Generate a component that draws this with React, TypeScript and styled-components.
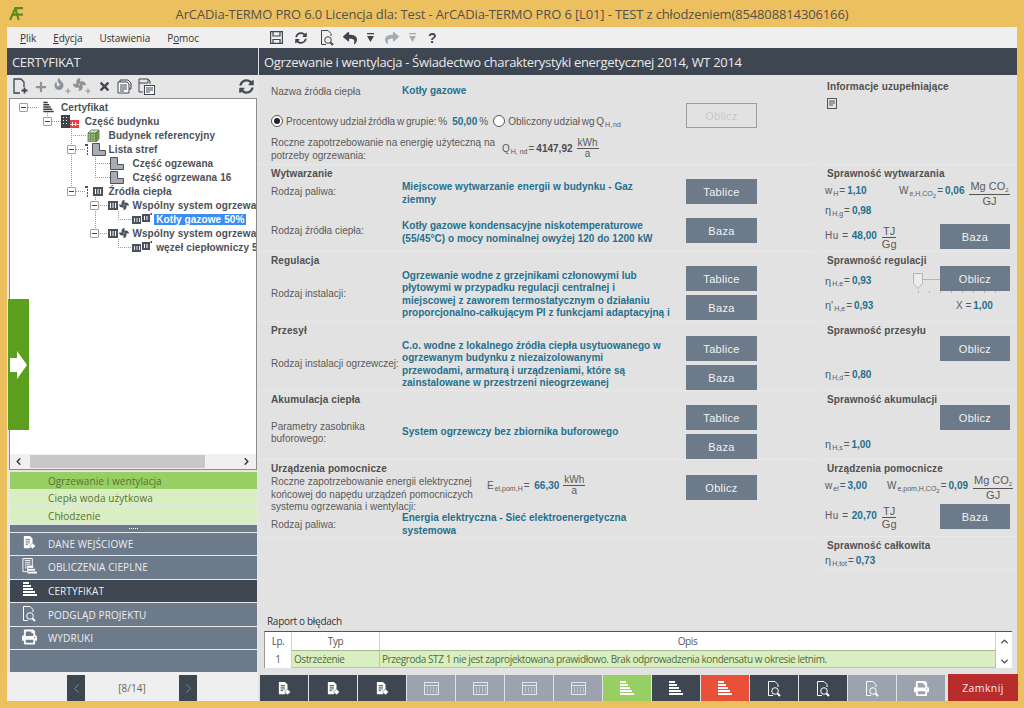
import React from "react";
import styled, { createGlobalStyle } from "styled-components";
import { FaReply, FaShare, FaSyncAlt, FaTimes, FaPlus, FaPrint, FaFan, FaFire } from "react-icons/fa";
import { ChevronLeft, ChevronRight, ChevronUp, ChevronDown } from "lucide-react";

const Global = createGlobalStyle`
  html, body { margin: 0; padding: 0; background: #edc05f; }
  * { box-sizing: border-box; }
`;

const ui = `"Open Sans", "Noto Sans", sans-serif`;
const arial = `"Liberation Sans", Arial, sans-serif`;

const Win = styled.div`
  width: 1024px; height: 708px; overflow: hidden; display: flex; flex-direction: column;
  background: #edc05f; padding: 0 7px 7px 7px; font-family: ${arial};
`;
const TitleBar = styled.div`
  height: 27px; flex: none; display: grid; grid-template-columns: 1fr auto 1fr; align-items: center;
  font: 13px ${ui}; color: #55504a; letter-spacing: -0.13px; white-space: nowrap;
`;
const LogoBox = styled.div` padding-left: 2px; display: flex; `;
const MenuBar = styled.div`
  height: 21px; flex: none; display: flex; align-items: center; background: #efefef;
`;
const MenuList = styled.div`
  width: 263px; flex: none; display: flex; padding-left: 13px; gap: 17px;
  font: 10px ${ui}; color: #333; letter-spacing: -0.05px;
  u { text-underline-offset: 1px; }
`;
const QuickBar = styled.div` display: flex; align-items: center; color: #3f4650; height: 100%; `;
const QuickSlot = styled.span<{ $w: number; $muted?: boolean }>`
  width: ${p => p.$w}px; display: flex; align-items: center; justify-content: flex-start;
  color: ${p => (p.$muted ? "#a5abb2" : "#3f4650")};
`;
const Help = styled.span` font: bold 14px ${arial}; color: #3f4650; `;
const Headers = styled.div`
  height: 27px; flex: none; display: grid; grid-template-columns: 251px 1fr; column-gap: 1px; background: #dcdcdc;
`;
const HeaderCell = styled.div`
  background: #3e4651; color: #e8eaec; display: flex; align-items: center; padding-left: 5px;
  font: 13px ${ui}; letter-spacing: -0.32px; white-space: nowrap; overflow: hidden;
`;
const Main = styled.div`
  flex: 1; min-height: 0; display: grid; grid-template-columns: 251px 1fr; column-gap: 1px; background: #e2e2e2;
`;

/* left panel */
const LeftPanel = styled.div`
  position: relative; display: flex; flex-direction: column; background: #e6e6e6; padding: 0 1px 0 2px; height: 597px;
`;
const TreeTools = styled.div`
  height: 23px; flex: none; display: flex; align-items: center; padding-left: 4px; color: #444b55;
`;
const ToolSlot = styled.span<{ $w: number; $muted?: boolean }>`
  width: ${p => p.$w}px; flex: none; display: flex; align-items: center; color: ${p => (p.$muted ? "#8d939a" : "#3f4650")};
`;
const ToolEnd = styled.span` margin-left: auto; padding-right: 3px; display: flex; color: #454c56; `;
const TreeBox = styled.div`
  position: relative; height: 372px; flex: none; background: #fff; border: 1px solid #8c8c8c; display: flex; flex-direction: column;
`;
const TreeScroll = styled.div` flex: 1; min-height: 0; overflow: hidden; padding-top: 1px; position: relative; `;
const TreeLines = styled.svg` position: absolute; left: 0; top: 0; pointer-events: none; `;
const Row = styled.div<{ $level: number }>`
  height: 14px; display: flex; align-items: center; white-space: nowrap; position: relative;
  padding-left: ${p => p.$level * 23.8}px; font: bold 10px ${arial}; letter-spacing: 0.1px; color: #4c5058;
`;
const ExpanderSlot = styled.span` width: 28px; flex: none; display: flex; padding-left: 9px; `;
const Expander = styled.span`
  width: 9px; height: 9px; border: 1px solid #a0a0a0; background: #fff; position: relative; border-radius: 1px;
  &::after { content: ""; position: absolute; left: 1px; right: 1px; top: 3px; height: 1px; background: #444; }
`;
const IconSlot = styled.span` width: 24px; margin-left: -1px; flex: none; display: flex; align-items: center; `;
const NodeLabel = styled.span<{ $selected?: boolean }>`
  ${p => p.$selected ? "background:#3a8df2;color:#fff;padding:0 2px;margin-left:-2px;" : ""}
`;
const HScroll = styled.div`
  height: 15px; flex: none; background: #f0f0f0; display: flex; align-items: center; color: #333; padding: 0 4px 0 3px;
`;
const HThumb = styled.div` width: 175px; height: 13px; background: #c8c8c8; margin-left: 6px; `;
const HEnd = styled.span` margin-left: auto; display: flex; `;
const GreenTab = styled.div`
  position: absolute; left: 1px; top: 224px; width: 21px; height: 131px; background: #5c9f1e;
  display: flex; align-items: center; justify-content: center;
`;
const SubList = styled.div` margin: 2px 0 0 1px; display: flex; flex-direction: column; gap: 1px; `;
const SubItem = styled.div<{ $active?: boolean }>`
  height: 16.5px; background: ${p => (p.$active ? "#97cf64" : "#d9efc1")}; padding: 1px 0 0 38px; display: flex; align-items: center;
  font: 10px ${ui}; letter-spacing: 0.08px; color: #557334;
`;
const Grip = styled.div`
  height: 7px; background: #6d7a89; margin: 1px 0 0 1px; display: flex; justify-content: center; align-items: center; gap: 1px;
  span { width: 1px; height: 1px; background: #fff; }
`;
const NavList = styled.div`
  margin: 1px 0 0 1px; flex: 1; background: #6d7a89; display: flex; flex-direction: column;
`;
const NavItem = styled.div<{ $active?: boolean }>`
  height: 23.6px; flex: none; display: flex; align-items: center; padding-left: 12px; gap: 11px;
  background: ${p => (p.$active ? "#3e4651" : "#6d7a89")}; border-bottom: 1.5px solid #e8e8e8;
  font: 10px ${ui}; letter-spacing: 0.1px; color: #eceef0;
`;
const NavIcon = styled.span` width: 15px; flex: none; display: flex; justify-content: center; color: #fff; margin-top: -3px; `;

/* content */
const Content = styled.div`
  display: flex; flex-direction: column; background: #e2e2e2; height: 597px; min-width: 0;
`;
const Columns = styled.div` display: grid; grid-template-columns: 556px 197px; column-gap: 5px; height: 495px; `;
const Column = styled.div` display: flex; flex-direction: column; `;
const Section = styled.section<{ $h: number }>`
  height: ${p => p.$h}px; flex: none; padding-left: 12px; border-bottom: 1px solid #e9e9e9;
`;
const SideSection = styled.section<{ $h: number; $pt?: number }>`
  height: ${p => p.$h}px; flex: none; padding: ${p => p.$pt ?? 0}px 0 0 5px; border-bottom: 1px solid #e9e9e9;
`;
const SectionTitle = styled.h3`
  margin: 2px 0 -2px 0; height: 14px; font: bold 10px/14px ${arial}; letter-spacing: 0.12px; color: #505050;
`;
const SideTitle = styled(SectionTitle)` margin-left: 2px; white-space: nowrap; `;
const FieldRow = styled.div<{ $label?: number; $gap?: number; $rowH: number; $top?: boolean }>`
  display: grid; grid-template-columns: ${p => p.$label ?? 131}px ${p => 415 - (p.$label ?? 131)}px 71px;
  grid-template-rows: ${p => p.$rowH}px;
  align-items: ${p => (p.$top ? "start" : "center")};
  margin-top: ${p => p.$gap ?? 0}px;
`;
const Label = styled.div<{ $shift?: number }>`
  font: 10px/12.5px ${arial}; color: #5a5a5a; white-space: nowrap; margin-top: ${p => p.$shift ?? 2}px;
`;
const Value = styled.div<{ $shift?: number }>`
  font: bold 10px/12.5px ${arial}; letter-spacing: 0.03px; color: #25708e; margin-top: ${p => p.$shift ?? 0}px; white-space: nowrap;
`;
const ButtonStack = styled.div` display: flex; flex-direction: column; gap: 4px; `;
const ActionButton = styled.button<{ $off?: boolean }>`
  position: relative; width: 71px; height: 25px; padding: 0; border-radius: 0; flex: none;
  font: 11px ${arial}; letter-spacing: 0.3px;
  background: ${p => (p.$off ? "#e2e2e2" : "#6d7a89")};
  color: ${p => (p.$off ? "#c8c8c8" : "#f2f3f5")};
  border: ${p => (p.$off ? "1px solid #9c9c9c" : "none")};
`;
const Intro = styled.div` display: grid; grid-template-columns: 415px 71px; `;
const IntroRows = styled.div` display: flex; flex-direction: column; padding-top: 9px; `;
const IntroName = styled.div` display: grid; grid-template-columns: 131px 1fr; height: 14px; align-items: center; `;
const RadioRow = styled.div`
  margin-top: 16px; height: 14px; display: flex; align-items: center; white-space: nowrap;
  font: 10px ${arial}; color: #5a5a5a; word-spacing: -1px;
`;
const Radio = styled.span<{ $on?: boolean }>`
  width: 12px; height: 12px; border-radius: 50%; border: 1px solid #555; background: #fff; flex: none; display: flex; align-items: center; justify-content: center;
  margin-right: 3px;
  &::after { content: ""; width: 6px; height: 6px; border-radius: 50%; background: ${p => (p.$on ? "#222" : "transparent")}; }
`;
const RadioNum = styled.b` color: #25708e; margin: 0 2px 0 5px; `;
const SecondRadio = styled.span` margin-left: 5px; display: flex; `;
const DemandRow = styled.div`
  margin-top: 7px; display: grid; grid-template-columns: 231px 1fr; align-items: center;
`;
const OffWrap = styled.div` padding-top: 28px; `;
const Formula = styled.div`
  display: inline-flex; align-items: center; white-space: nowrap; font: 10px ${arial}; color: #5a5a5a;
`;
const Sub = styled.span` font-size: 7px; position: relative; top: 3px; margin: 0 1px; `;
const Sub2 = styled.span` font-size: 6px; position: relative; top: 2px; `;
const Num = styled.b` color: #25708e; margin: 0 2px; `;
const Strong = styled.b` color: #4c4c4c; margin: 0 2px; `;
const Fraction = styled.span`
  display: inline-flex; flex-direction: column; align-items: center; line-height: 10px; margin-left: 2px;
  & > span:first-child { border-bottom: 1px solid #555; padding: 0 1px; }
`;
const BigFraction = styled(Fraction)<{ $drop?: number }>`
  font-size: 11px; line-height: 12px; margin-left: 3px; margin-top: ${p => p.$drop ?? 4}px;
`;
const Eta = styled.span` font: 11px ${arial}; `;
const Hu = styled.span` letter-spacing: 0.6px; margin-right: 1px; `;
const HuFormula = styled(Formula)` margin-top: -3px; `;
const InfoIcon = styled.div` margin: 6px 0 0 2px; display: flex; color: #555; `;
const SideRow = styled.div<{ $h: number; $cols?: string; $top?: number }>`
  height: ${p => p.$h}px; display: grid; align-items: center; margin-top: ${p => p.$top ?? 0}px;
  grid-template-columns: ${p => p.$cols ?? "1fr"}; grid-template-rows: minmax(0, 1fr);
`;
const ButtonEnd = styled.div` display: flex; justify-content: flex-end; padding-right: 7px; `;
const SideBtn = styled(ActionButton)` width: 70px; `;
const SliderCell = styled.div` height: 100%; `;
const Slider = styled.svg` display: block; overflow: visible; `;
const LowFormula = styled(Formula)` margin-top: 4px; `;

/* report */
const Report = styled.div` margin-top: auto; padding: 0 5px 4px 5px; `;
const ReportTitle = styled.div` font: 10px/14px ${ui}; color: #333; padding-left: 3px; letter-spacing: -0.3px; margin-bottom: 3px; `;
const Table = styled.div`
  display: grid; grid-template-columns: 27px 88px 1fr 16px; grid-template-rows: 18px 18px; background: #fff;
  border-top: 1px solid #555; border-left: 1px solid #9a9a9a; height: 37px;
  font: 10px ${ui}; color: #555; letter-spacing: -0.42px;
`;
const Head = styled.div` display: flex; align-items: center; justify-content: center; border-right: 1px solid #d0d0d0; `;
const Num1 = styled.div` display: flex; align-items: center; justify-content: center; border-right: 1px solid #d0d0d0; `;
const Cell = styled.div` background: #d9efc1; display: flex; align-items: center; padding-left: 2px; border-right: 1px solid #b7c7a6; border-top: 1px solid #a7b896; border-bottom: 1px solid #b7c7a6; white-space: nowrap; overflow: hidden; color: #516b3a;`;
const VScroll = styled.div`
  grid-column: 4; grid-row: 1 / 3; display: flex; flex-direction: column; justify-content: space-between; align-items: center; color: #444; padding: 4px 0 1px;
`;

/* footer */
const Footer = styled.div`
  height: 29px; flex: none; display: grid; grid-template-columns: 251px 1fr; column-gap: 2px; background: #e2e2e2;
`;
const Pager = styled.div`
  background: #efefef; display: flex; align-items: flex-end; padding-left: 60px; font: 10px ${ui}; color: #666;
`;
const PagerBtn = styled.span`
  width: 18px; height: 26px; background: #3e4651; color: #aab; display: flex; align-items: center; justify-content: center; flex: none;
`;
const PagerText = styled.span` width: 94px; height: 26px; display: flex; align-items: center; justify-content: center; `;
const FootBar = styled.div` display: flex; gap: 1px; align-items: flex-end; `;
const FootBtn = styled.div<{ $bg: string }>`
  width: 48px; height: 26px; background: ${p => p.$bg}; display: flex; align-items: center; justify-content: center; color: #fff; flex: none;
`;
const CloseBtn = styled.button`
  margin-left: 2px; width: 70px; height: 27px; background: #b82c2c; color: #f5e6e6; border: 0; padding: 0; font: 10.5px ${ui}; letter-spacing: 0.4px; flex: none;
`;

/* drawings */
const Logo = () => (
  <svg width="15" height="15" viewBox="0 0 14 14" fill="none" stroke="#5b8a1e" strokeWidth="2">
    <path d="M1 13L6 2h3M6 2l3 11" />
    <path d="M3 8h10M6 2h7" />
  </svg>
);
const Bars = ({ color = "#fff", w = 14, h = 16 }: { color?: string; w?: number; h?: number }) => (
  <svg width={w} height={h} viewBox="0 0 14 16" fill={color}>
    <rect x="0" y="1" width="6" height="2" />
    <rect x="0" y="4" width="8" height="2" />
    <rect x="0" y="7" width="10" height="2" />
    <rect x="0" y="10" width="12" height="2" />
    <rect x="0" y="13" width="14" height="2" />
  </svg>
);
const Doc = ({ bg = "#3e4651" }: { bg?: string }) => (
  <svg width="13" height="15" viewBox="0 0 15 17">
    <path d="M1 1h7l3 3v6l-3 5H1z" fill="#fff" />
    <path d="M3 5h5M3 7h5M3 9h5M3 11h3" stroke={bg} />
    <path d="M11 9l3.500 3.500L11 16l-3.500-3.500z" fill="#fff" stroke={bg} strokeWidth=".6" />
  </svg>
);
const Calc = ({ color = "#e4e6ea" }: { color?: string }) => (
  <svg width="15" height="13" viewBox="0 0 15 13" fill="none" stroke={color}>
    <rect x=".5" y=".5" width="14" height="12" />
    <path d="M1 3.500h13" />
    <path d="M3 6h1M6 6h1M9 6h1M12 6h1M3 8h1M6 8h1M9 8h1M12 8h1M3 10h1M6 10h1M9 10h1M12 10h1" />
  </svg>
);
const CalcNav = () => (
  <svg width="16" height="18" viewBox="0 0 16 18" fill="#fff">
    <path d="M1 1h10v8H6v6H1z" fill="none" stroke="#fff" />
    <path d="M3 3h6M3 5h6M3 7h6M3 9h2M3 11h2" stroke="#fff" fill="none" />
    <rect x="6" y="9" width="6" height="2" />
    <rect x="6" y="12" width="8" height="2" />
    <rect x="6" y="15" width="10" height="2" />
  </svg>
);
const Preview = ({ color = "#fff" }: { color?: string }) => (
  <svg width="15" height="17" viewBox="0 0 15 17" fill="none" stroke={color}>
    <path d="M6 15.500H1.500v-14H8l3 3V7" />
    <circle cx="8" cy="11" r="3.300" />
    <path d="M10.500 13.500l2.500 2.500" strokeWidth="2" />
  </svg>
);
const Floppy = () => (
  <svg width="13" height="13" viewBox="0 0 13 13" fill="none" stroke="#3f4650" strokeWidth="1.200">
    <path d="M.6.6h11.800v11.800H.6z" />
    <path d="M3 .6v4.400h7V.6M3 12.400V8.500h7v3.900" />
  </svg>
);
const Drop = ({ color }: { color: string }) => (
  <svg width="9" height="10" viewBox="0 0 9 10" fill={color}>
    <rect x="1" y="0" width="7" height="1.300" />
    <path d="M1 3h7L4.500 9z" />
  </svg>
);
const NewDoc = () => (
  <svg width="16" height="17" viewBox="0 0 16 17" fill="none" stroke="#3f4650" strokeWidth="1.300">
    <path d="M7 15H1V1h7l3 3v5" />
    <path d="M11.500 9.500v6M8.500 12.500h6" strokeWidth="1.800" />
  </svg>
);
const Cascade = () => (
  <svg width="16" height="15" viewBox="0 0 16 15" fill="none" stroke="#3f4650">
    <path d="M3 3V1h8l3 3v6h-2" />
    <path d="M1 3h9l2 2v9H1z" fill="#fff" />
    <path d="M3 6h7M3 8h7M3 10h7M3 12h4" />
  </svg>
);
const SaveDoc = () => (
  <svg width="18" height="18" viewBox="0 0 18 18" fill="none" stroke="#3f4650">
    <path d="M1 1h9v4H1zM1 5v9h4" />
    <path d="M10 1l2 2v3" />
    <rect x="6.500" y="7.500" width="10" height="9" fill="#fff" />
    <path d="M8 10h7M8 12h7M8 14h4" />
  </svg>
);
const IconPlus = ({ children }: { children: React.ReactNode }) => (
  <PlusWrap>
    {children}
    <PlusMark><FaPlus size={6} /></PlusMark>
  </PlusWrap>
);
const PlusWrap = styled.span` position: relative; display: flex; width: 18px; height: 17px; color: #8d939a; `;
const PlusMark = styled.span` position: absolute; right: 0; bottom: 1px; display: flex; `;
const Radiator = ({ w = 10, h = 9, color = "#4b515a" }: { w?: number; h?: number; color?: string }) => (
  <svg width={w} height={h} viewBox="0 0 10 9" fill={color} style={{ flex: "none" }}>
    <path d="M0 0h10v9H0z" />
    <path d="M2 2h1v5H2zM4.500 2h1v5h-1zM7 2h1v5H7z" fill="#fff" />
  </svg>
);
const Fan = () => <FaFan size={10} color="#4b515a" />;
const HeaterPair = () => (
  <svg width="20" height="12" viewBox="0 0 20 12" fill="#4b515a" style={{ flex: "none" }}>
    <path d="M0 3h9v8H0z" />
    <path d="M2 5h1v4H2zM4.500 5h1v4h-1zM7 5h1v4H7z" fill="#e8e8e8" />
    <path d="M10 1h8v8h-8z" />
    <path d="M12 3h1v4h-1zM14.500 3h1v4h-1z" fill="#fff" />
    <path d="M18.500 0h1.500v2h-1.500z" />
  </svg>
);
const BuildingIcon = () => (
  <svg width="18" height="13" viewBox="0 0 18 13" style={{ flex: "none" }}>
    <path d="M0 0h9v13H0z" fill="#3f444c" />
    <path d="M2 2h1v1H2zM5 2h1v1H5zM2 5h1v1H2zM5 5h1v1H5zM2 8h1v1H2zM5 8h1v1H5z" fill="#fff" />
    <path d="M9 5h9v8H9z" fill="#e53f3f" />
    <path d="M11 7h1v4h-1zM14 7h1v4h-1zM9 9h9v.8H9z" fill="#fff" />
  </svg>
);
const RefBuilding = () => (
  <svg width="13" height="13" viewBox="0 0 13 13" style={{ flex: "none", marginLeft: 2 }}>
    <path d="M1 4h8v9H1z" fill="#9ec97a" stroke="#54604a" strokeWidth=".7" />
    <path d="M1 4l3-3h8l-3 3z" fill="#cfe7b6" stroke="#54604a" strokeWidth=".7" />
    <path d="M9 4l3-3v9l-3 3z" fill="#6fa23e" stroke="#54604a" strokeWidth=".7" />
    <path d="M3.500 4v9M6 4v9M1 7h8M1 10h8" stroke="#54604a" strokeWidth=".5" />
  </svg>
);
const ZoneL = () => (
  <svg width="14" height="13" viewBox="0 0 14 13" style={{ flex: "none" }}>
    <path d="M.5.5h7v7h6v5H.5z" fill="#a9adb2" stroke="#4b515a" />
  </svg>
);
const ListMark = () => (
  <svg width="4" height="13" viewBox="0 0 4 13" fill="#4b515a" style={{ flex: "none", marginRight: 2 }}>
    <path d="M0 1h3v2H0zM2 4h1v2H2zM2 7h1v2H2zM2 10h1v2H2z" />
  </svg>
);
const Stack = styled.span` display: inline-flex; align-items: center; gap: 1px; `;
const Nudge = styled.span<{ $x: number }>` margin-left: ${p => p.$x}px; display: flex; `;
const Arrow = () => (
  <svg width="17" height="28" viewBox="0 0 17 28" fill="#fff"><path d="M0 7h7V0l10 14L7 28v-7H0z" /></svg>
);
const Note = () => (
  <svg width="10" height="11" viewBox="0 0 10 11" fill="none" stroke="#555">
    <rect x=".5" y=".5" width="9" height="10" />
    <path d="M2 3h6M2 5h6M2 7h4" />
  </svg>
);

type Node = { level: number; label: string; icon: React.ReactNode; exp?: boolean; selected?: boolean };
const nodes: Node[] = [
  { level: 0, label: "Certyfikat", exp: true, icon: <Nudge $x={6}><Bars color="#3b4048" w={11} h={12} /></Nudge> },
  { level: 1, label: "Część budynku", exp: true, icon: <BuildingIcon /> },
  { level: 2, label: "Budynek referencyjny", icon: <RefBuilding /> },
  { level: 2, label: "Lista stref", exp: true, icon: <Stack><ListMark /><ZoneL /></Stack> },
  { level: 3, label: "Część ogzewana", icon: <Nudge $x={2}><ZoneL /></Nudge> },
  { level: 3, label: "Część ogrzewana 16", icon: <Nudge $x={2}><ZoneL /></Nudge> },
  { level: 2, label: "Źródła ciepła", exp: true, icon: <Stack><ListMark /><Radiator w={12} h={9} /></Stack> },
  { level: 3, label: "Wspólny system ogrzewania", exp: true, icon: <Stack><Radiator /><Fan /></Stack> },
  { level: 4, label: "Kotły gazowe 50%", selected: true, icon: <HeaterPair /> },
  { level: 3, label: "Wspólny system ogrzewania", exp: true, icon: <Stack><Radiator /><Fan /></Stack> },
  { level: 4, label: "węzeł ciepłowniczy 50%", icon: <HeaterPair /> },
];
const hLines = [[18, 28, 8], [42, 52, 22], [61, 76, 36], [66, 75, 50], [85, 100, 64], [85, 100, 78], [66, 75, 92], [90, 99, 106], [108, 122, 120], [90, 99, 134], [108, 122, 148]];

const footer: { bg: string; el: React.ReactNode }[] = [
  { bg: "#3e4651", el: <Doc /> }, { bg: "#3e4651", el: <Doc /> }, { bg: "#3e4651", el: <Doc /> },
  { bg: "#9ca3af", el: <Calc /> }, { bg: "#9ca3af", el: <Calc /> }, { bg: "#9ca3af", el: <Calc /> }, { bg: "#9ca3af", el: <Calc /> },
  { bg: "#97cf64", el: <Bars /> }, { bg: "#3e4651", el: <Bars /> }, { bg: "#e8503a", el: <Bars /> },
  { bg: "#3e4651", el: <Preview /> }, { bg: "#3e4651", el: <Preview /> }, { bg: "#9ca3af", el: <Preview /> },
  { bg: "#9ca3af", el: <FaPrint size={15} /> },
];

export default function App() {
  return (
    <Win>
      <Global />
      <TitleBar>
        <LogoBox><Logo /></LogoBox>
        <span>ArCADia-TERMO PRO 6.0 Licencja dla: Test - ArCADia-TERMO PRO 6 [L01] - TEST z chłodzeniem(854808814306166)</span>
        <span />
      </TitleBar>
      <MenuBar>
        <MenuList>
          <span><u>P</u>lik</span>
          <span><u>E</u>dycja</span>
          <span>Ustawienia</span>
          <span>P<u>o</u>moc</span>
        </MenuList>
        <QuickBar>
          <QuickSlot $w={25}><Floppy /></QuickSlot>
          <QuickSlot $w={25}><FaSyncAlt size={12} /></QuickSlot>
          <QuickSlot $w={23}><Preview color="#3f4650" /></QuickSlot>
          <QuickSlot $w={23}><FaReply size={14} /></QuickSlot>
          <QuickSlot $w={19}><Drop color="#3f4650" /></QuickSlot>
          <QuickSlot $w={23} $muted><FaShare size={14} /></QuickSlot>
          <QuickSlot $w={20}><Drop color="#a5abb2" /></QuickSlot>
          <Help>?</Help>
        </QuickBar>
      </MenuBar>
      <Headers>
        <HeaderCell>CERTYFIKAT</HeaderCell>
        <HeaderCell>Ogrzewanie i wentylacja - Świadectwo charakterystyki energetycznej 2014, WT 2014</HeaderCell>
      </Headers>
      <Main>
        <LeftPanel>
          <TreeTools>
            <ToolSlot $w={22}><NewDoc /></ToolSlot>
            <ToolSlot $w={18} $muted><FaPlus size={12} /></ToolSlot>
            <ToolSlot $w={20} $muted><IconPlus><FaFire size={12} /></IconPlus></ToolSlot>
            <ToolSlot $w={25} $muted><IconPlus><FaFan size={13} /></IconPlus></ToolSlot>
            <ToolSlot $w={19}><FaTimes size={13} /></ToolSlot>
            <ToolSlot $w={21}><Cascade /></ToolSlot>
            <ToolSlot $w={20}><SaveDoc /></ToolSlot>
            <ToolEnd><FaSyncAlt size={15} /></ToolEnd>
          </TreeTools>
          <TreeBox>
            <TreeScroll>
              <TreeLines width="246" height="170" fill="none" stroke="#9a9a9a" strokeDasharray="1 1">
                {hLines.map((h, i) => <path key={i} d={`M${h[0]} ${h[2]}.5H${h[1]}`} />)}
                <path d="M37.500 8V18M61.500 26V88M85.500 54V78M85.500 96V130M108.500 112V120M108.500 140V148" />
              </TreeLines>
              {nodes.map((n, i) => (
                <Row key={i} $level={n.level}>
                  <ExpanderSlot>{n.exp && <Expander />}</ExpanderSlot>
                  <IconSlot>{n.icon}</IconSlot>
                  <NodeLabel $selected={n.selected}>{n.label}</NodeLabel>
                </Row>
              ))}
            </TreeScroll>
            <HScroll>
              <ChevronLeft size={11} strokeWidth={3} />
              <HThumb />
              <HEnd><ChevronRight size={11} strokeWidth={3} /></HEnd>
            </HScroll>
          </TreeBox>
          <SubList>
            <SubItem $active>Ogrzewanie i wentylacja</SubItem>
            <SubItem>Ciepła woda użytkowa</SubItem>
            <SubItem>Chłodzenie</SubItem>
          </SubList>
          <Grip><span /><span /><span /><span /><span /></Grip>
          <NavList>
            <NavItem><NavIcon><Doc bg="#6d7a89" /></NavIcon>DANE WEJŚCIOWE</NavItem>
            <NavItem><NavIcon><CalcNav /></NavIcon>OBLICZENIA CIEPLNE</NavItem>
            <NavItem $active><NavIcon><Bars /></NavIcon>CERTYFIKAT</NavItem>
            <NavItem><NavIcon><Preview /></NavIcon>PODGLĄD PROJEKTU</NavItem>
            <NavItem><NavIcon><FaPrint size={16} /></NavIcon>WYDRUKI</NavItem>
          </NavList>
          <GreenTab><Arrow /></GreenTab>
        </LeftPanel>

        <Content>
          <Columns>
            <Column>
              <Section $h={90}>
                <Intro>
                  <IntroRows>
                    <IntroName><Label>Nazwa źródła ciepła</Label><Value>Kotły gazowe</Value></IntroName>
                    <RadioRow>
                      <Radio $on />Procentowy udział źródła w grupie: %<RadioNum>50,00</RadioNum>%
                      <SecondRadio><Radio /></SecondRadio>
                      Obliczony udział wg Q<Sub>H, nd</Sub>
                    </RadioRow>
                    <DemandRow>
                      <Label>Roczne zapotrzebowanie na energię użyteczną na<br />potrzeby ogrzewania:</Label>
                      <Formula>Q<Sub>H, nd</Sub> =<Strong>4147,92</Strong><Fraction><span>kWh</span><span>a</span></Fraction></Formula>
                    </DemandRow>
                  </IntroRows>
                  <OffWrap><ActionButton $off>Oblicz</ActionButton></OffWrap>
                </Intro>
              </Section>
              <Section $h={87}>
                <SectionTitle>Wytwarzanie</SectionTitle>
                <FieldRow $rowH={25}>
                  <Label>Rodzaj paliwa:</Label>
                  <Value $shift={4}>Miejscowe wytwarzanie energii w budynku - Gaz<br />ziemny</Value>
                  <ActionButton>Tablice</ActionButton>
                </FieldRow>
                <FieldRow $rowH={25} $gap={14}>
                  <Label>Rodzaj źródła ciepła:</Label>
                  <Value $shift={4}>Kotły gazowe kondensacyjne niskotemperaturowe<br />(55/45°C) o mocy nominalnej owyżej 120 do 1200 kW</Value>
                  <ActionButton>Baza</ActionButton>
                </FieldRow>
              </Section>
              <Section $h={70}>
                <SectionTitle>Regulacja</SectionTitle>
                <FieldRow $rowH={54} $gap={-1}>
                  <Label>Rodzaj instalacji:</Label>
                  <Value $shift={3}>Ogrzewanie wodne z grzejnikami członowymi lub<br />płytowymi w przypadku regulacji centralnej i<br />miejscowej z zaworem termostatycznym o działaniu<br />proporcjonalno-całkującym PI z funkcjami adaptacyjną i</Value>
                  <ButtonStack><ActionButton>Tablice</ActionButton><ActionButton>Baza</ActionButton></ButtonStack>
                </FieldRow>
              </Section>
              <Section $h={69}>
                <SectionTitle>Przesył</SectionTitle>
                <FieldRow $rowH={54} $gap={-1}>
                  <Label>Rodzaj instalacji ogrzewczej:</Label>
                  <Value $shift={3}>C.o. wodne z lokalnego źródła ciepła usytuowanego w<br />ogrzewanym budynku z niezaizolowanymi<br />przewodami, armaturą i urządzeniami, które są<br />zainstalowane w przestrzeni nieogrzewanej</Value>
                  <ButtonStack><ActionButton>Tablice</ActionButton><ActionButton>Baza</ActionButton></ButtonStack>
                </FieldRow>
              </Section>
              <Section $h={69}>
                <SectionTitle>Akumulacja ciepła</SectionTitle>
                <FieldRow $rowH={54} $gap={-1}>
                  <Label>Parametry zasobnika<br />buforowego:</Label>
                  <Value>System ogrzewczy bez zbiornika buforowego</Value>
                  <ButtonStack><ActionButton>Tablice</ActionButton><ActionButton>Baza</ActionButton></ButtonStack>
                </FieldRow>
              </Section>
              <Section $h={78}>
                <SectionTitle>Urządzenia pomocnicze</SectionTitle>
                <FieldRow $rowH={37} $label={216} $top $gap={1}>
                  <Label $shift={1}>Roczne zapotrzebowanie energii elektrycznej<br />końcowej do napędu urządzeń pomocniczych<br />systemu ogrzewania i wentylacji:</Label>
                  <Formula>E<Sub>el,pom,H</Sub>=&nbsp;<Num>66,30</Num><Fraction><span>kWh</span><span>a</span></Fraction></Formula>
                  <ActionButton>Oblicz</ActionButton>
                </FieldRow>
                <FieldRow $rowH={25}>
                  <Label>Rodzaj paliwa:</Label>
                  <Value>Energia elektryczna - Sieć elektroenergetyczna<br />systemowa</Value>
                </FieldRow>
              </Section>
            </Column>
            <Column>
              <SideSection $h={90} $pt={3}>
                <SideTitle>Informacje uzupełniające</SideTitle>
                <InfoIcon><Note /></InfoIcon>
              </SideSection>
              <SideSection $h={87}>
                <SideTitle>Sprawność wytwarzania</SideTitle>
                <SideRow $h={22} $cols="74px 1fr">
                  <Formula>w<Sub>H</Sub>=<Num>1,10</Num></Formula>
                  <Formula>W<Sub>e,H,CO<Sub2>2</Sub2></Sub>=<Num>0,06</Num><BigFraction $drop={6}><span>Mg CO<Sub2>2</Sub2></span><span>GJ</span></BigFraction></Formula>
                </SideRow>
                <SideRow $h={18}><Formula><Eta>η</Eta><Sub>H,g</Sub>=<Num>0,98</Num></Formula></SideRow>
                <SideRow $h={25} $cols="115px 1fr" $top={5}>
                  <HuFormula><Hu>Hu =</Hu><Num>48,00</Num><BigFraction><span>TJ</span><span>Gg</span></BigFraction></HuFormula>
                  <ButtonEnd><SideBtn>Baza</SideBtn></ButtonEnd>
                </SideRow>
              </SideSection>
              <SideSection $h={70}>
                <SideTitle>Sprawność regulacji</SideTitle>
                <SideRow $h={25} $cols="88px 27px 1fr" $top={-1}>
                  <LowFormula><Eta>η</Eta><Sub>H,e</Sub>=<Num>0,93</Num></LowFormula>
                  <SliderCell>
                    <Slider width="87" height="27" viewBox="0 0 87 27" fill="none" stroke="#b5b5b5">
                      <path d="M10 13.500h70" />
                      <path d="M.5 7.500h9v10l-4.500 5-4.500-5z" fill="#ececec" />
                      <path d="M5.500 25v2M16.500 25v2M27.500 25v2M38.500 25v2M49.500 25v2M60.500 25v2M71.500 25v2M82.500 25v2" />
                    </Slider>
                  </SliderCell>
                  <ButtonEnd><SideBtn>Oblicz</SideBtn></ButtonEnd>
                </SideRow>
                <SideRow $h={16} $cols="131px 1fr" $top={6}>
                  <Formula><Eta>η'</Eta><Sub>H,e</Sub>=<Num>0,93</Num></Formula>
                  <Formula>X =<Num>1,00</Num></Formula>
                </SideRow>
              </SideSection>
              <SideSection $h={69}>
                <SideTitle>Sprawność przesyłu</SideTitle>
                <SideRow $h={25} $top={-1}><ButtonEnd><SideBtn>Oblicz</SideBtn></ButtonEnd></SideRow>
                <SideRow $h={16} $top={5}><Formula><Eta>η</Eta><Sub>H,d</Sub>=<Num>0,80</Num></Formula></SideRow>
              </SideSection>
              <SideSection $h={69}>
                <SideTitle>Sprawność akumulacji</SideTitle>
                <SideRow $h={25} $top={-1}><ButtonEnd><SideBtn>Oblicz</SideBtn></ButtonEnd></SideRow>
                <SideRow $h={16} $top={6}><Formula><Eta>η</Eta><Sub>H,s</Sub>=<Num>1,00</Num></Formula></SideRow>
              </SideSection>
              <SideSection $h={77}>
                <SideTitle>Urządzenia pomocnicze</SideTitle>
                <SideRow $h={18} $cols="62px 1fr" $top={2}>
                  <Formula>w<Sub>el</Sub>=<Num>3,00</Num></Formula>
                  <Formula>W<Sub>e,pom,H,CO<Sub2>2</Sub2></Sub>=<Num>0,09</Num><BigFraction><span>Mg CO<Sub2>2</Sub2></span><span>GJ</span></BigFraction></Formula>
                </SideRow>
                <SideRow $h={25} $cols="115px 1fr" $top={10}>
                  <HuFormula><Hu>Hu =</Hu><Num>20,70</Num><BigFraction><span>TJ</span><span>Gg</span></BigFraction></HuFormula>
                  <ButtonEnd><SideBtn>Baza</SideBtn></ButtonEnd>
                </SideRow>
              </SideSection>
              <SideSection $h={33}>
                <SideTitle>Sprawność całkowita</SideTitle>
                <SideRow $h={16} $top={1}><Formula><Eta>η</Eta><Sub>H,tot</Sub>=<Num>0,73</Num></Formula></SideRow>
              </SideSection>
            </Column>
          </Columns>
          <Report>
            <ReportTitle>Raport o błędach</ReportTitle>
            <Table>
              <Head>Lp.</Head>
              <Head>Typ</Head>
              <Head>Opis</Head>
              <VScroll><ChevronUp size={11} strokeWidth={3} /><ChevronDown size={11} strokeWidth={3} /></VScroll>
              <Num1>1</Num1>
              <Cell>Ostrzeżenie</Cell>
              <Cell>Przegroda STZ 1 nie jest zaprojektowana prawidłowo. Brak odprowadzenia kondensatu w okresie letnim.</Cell>
            </Table>
          </Report>
        </Content>
      </Main>
      <Footer>
        <Pager>
          <PagerBtn><ChevronLeft size={15} strokeWidth={1} /></PagerBtn>
          <PagerText>[8/14]</PagerText>
          <PagerBtn><ChevronRight size={15} strokeWidth={1} /></PagerBtn>
        </Pager>
        <FootBar>
          {footer.map((f, i) => <FootBtn key={i} $bg={f.bg}>{f.el}</FootBtn>)}
          <CloseBtn>Zamknij</CloseBtn>
        </FootBar>
      </Footer>
    </Win>
  );
}
